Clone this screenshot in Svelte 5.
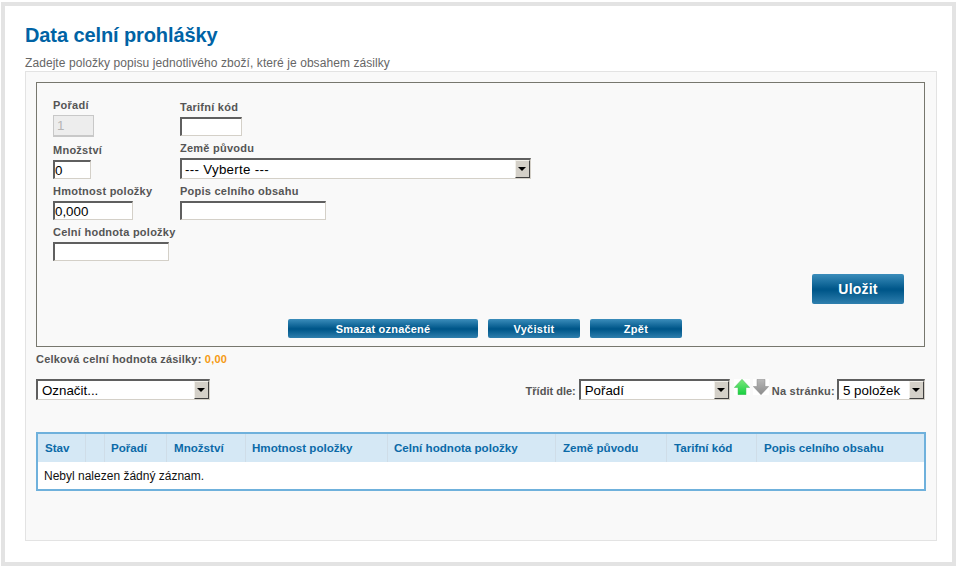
<script>
  const columns = ['Stav', '', 'Pořadí', 'Množství', 'Hmotnost položky', 'Celní hodnota položky', 'Země původu', 'Tarifní kód', 'Popis celního obsahu'];
</script>

<div class="frame">
  <h1>Data celní prohlášky</h1>
  <p class="intro">Zadejte položky popisu jednotlivého zboží, které je obsahem zásilky</p>
  <div class="panel">
    <section class="box">
      <div class="fields">
        <div class="col col-left">
          <label class="f f1"><span>Pořadí</span><input class="w-order" value="1" disabled /></label>
          <label class="f f2"><span>Množství</span><input class="w-qty" value="0" /></label>
          <label class="f f3"><span>Hmotnost položky</span><input class="w-weight" value="0,000" /></label>
          <label class="f f4"><span>Celní hodnota položky</span><input class="w-value" /></label>
        </div>
        <div class="col col-right">
          <label class="f f5"><span>Tarifní kód</span><input class="w-tariff" /></label>
          <div class="f f6">
            <span>Země původu</span>
            <div class="select w-country"><span class="val">--- Vyberte ---</span><i class="arrow"></i></div>
          </div>
          <label class="f f7"><span>Popis celního obsahu</span><input class="w-desc" /></label>
        </div>
      </div>
      <div class="save-row"><button class="btn big">Uložit</button></div>
      <div class="btn-row">
        <button class="btn b-delete">Smazat označené</button>
        <button class="btn b-small">Vyčistit</button>
        <button class="btn b-small">Zpět</button>
      </div>
    </section>

    <p class="total">Celková celní hodnota zásilky: <b>0,00</b></p>

    <div class="toolbar">
      <div class="select w-mark"><span class="val">Označit...</span><i class="arrow"></i></div>
      <div class="sort">
        <span class="tl tl-sort">Třídit dle:</span>
        <div class="select w-sort"><span class="val">Pořadí</span><i class="arrow"></i></div>
        <svg class="ic" width="16" height="16" viewBox="0 0 16 16">
          <defs>
            <linearGradient id="gu" x1="0" y1="0" x2="0" y2="1">
              <stop offset="0" stop-color="#7ee87e" />
              <stop offset="1" stop-color="#16d040" />
            </linearGradient>
          </defs>
          <path d="M8 .3 15.7 8.5H12V15.7H4V8.5H.3Z" fill="url(#gu)" stroke="#4fb85f" stroke-width=".5" />
        </svg>
        <svg class="ic ic2" width="16" height="16" viewBox="0 0 16 16">
          <defs>
            <linearGradient id="gd" x1="0" y1="0" x2="0" y2="1">
              <stop offset="0" stop-color="#b8b8b8" />
              <stop offset="1" stop-color="#8c8c8c" />
            </linearGradient>
          </defs>
          <path d="M4 .3H12V7.5H15.7L8 15.7 .3 7.5H4Z" fill="url(#gd)" stroke="#8a8a8a" stroke-width=".5" />
        </svg>
        <span class="tl">Na stránku:</span>
        <div class="select w-page"><span class="val">5 položek</span><i class="arrow"></i></div>
      </div>
    </div>

    <table>
      <thead>
        <tr>
          {#each columns as c}
            <th>{c}</th>
          {/each}
        </tr>
      </thead>
      <tbody>
        <tr><td colspan="9">Nebyl nalezen žádný záznam.</td></tr>
      </tbody>
    </table>
  </div>
</div>

<style>
  :global(body) {
    margin: 0;
    background: #fff;
    font-family: "Liberation Sans", Arial, sans-serif;
  }
  .frame {
    box-sizing: border-box;
    width: 955px;
    height: 564px;
    margin: 2px 0 0 1px;
    border: 4px solid #e3e3e3;
    background: #fff;
    padding: 16px 15px 0 20px;
  }
  h1 {
    margin: 0;
    font-size: 20px;
    line-height: 26px;
    font-weight: bold;
    color: #0063a5;
    letter-spacing: -0.1px;
  }
  .intro {
    margin: 8px 0 0;
    font-size: 12px;
    line-height: 14px;
    color: #666;
    letter-spacing: 0.07px;
  }
  .panel {
    box-sizing: border-box;
    height: 470px;
    margin-top: 1px;
    border: 1px solid #e3e3e3;
    background: #f9f9f9;
    padding: 10px 11px 0 10px;
  }
  .box {
    box-sizing: border-box;
    height: 265px;
    width: 889px;
    border: 1px solid #77776e;
    padding: 0 0 0 16px;
  }
  .fields {
    display: flex;
    height: 191px;
  }
  .col {
    display: flex;
    flex-direction: column;
    align-items: flex-start;
  }
  .col-left { width: 127px; }
  .f {
    display: block;
  }
  .f > span {
    display: block;
    font-size: 11px;
    line-height: 13px;
    font-weight: bold;
    color: #555;
    white-space: nowrap;
    letter-spacing: 0.25px;
    margin-bottom: 3px;
  }
  .f1 { margin-top: 16px; }
  .f2 { margin-top: 7px; }
  .f3 { margin-top: 6px; }
  .f4 { margin-top: 6px; }
  .f5 { margin-top: 18px; }
  .f6 { margin-top: 6px; }
  .f7 { margin-top: 6px; }

  input {
    display: block;
    box-sizing: border-box;
    height: 19px;
    margin: 0;
    padding: 0;
    font: 13.33px "Liberation Sans", Arial, sans-serif;
    color: #000;
    background: #fff;
    border-style: solid;
    border-width: 2px 1px 1px 2px;
    border-color: #5f5f5f #d4d0c8 #d4d0c8 #5f5f5f;
    border-radius: 0;
    outline: none;
  }
  input:disabled {
    background: #ededed;
    color: #b5b5b5;
    height: 22px;
    padding-left: 3px;
    border-width: 1px 1px 2px;
    border-color: #c8c8c8;
  }
  .w-order { width: 41px; }
  .w-qty { width: 38px; }
  .w-weight { width: 80px; }
  .w-value { width: 116px; }
  .w-tariff { width: 62px; }
  .w-desc { width: 146px; }

  .select {
    box-sizing: border-box;
    display: flex;
    align-items: stretch;
    height: 21px;
    background: #fff;
    border-style: solid;
    border-width: 2px 1px 1px 2px;
    border-color: #5f5f5f #d4d0c8 #d4d0c8 #5f5f5f;
  }
  .val {
    flex: 1;
    min-width: 0;
    font-size: 13.33px;
    line-height: 20px;
    padding-left: 4px;
    color: #000;
    white-space: nowrap;
  }
  .w-country .val {
    padding-left: 3px;
    letter-spacing: 0.3px;
  }
  .arrow {
    position: relative;
    flex: none;
    box-sizing: border-box;
    width: 15px;
    background: #d4d0c8;
    border-style: solid;
    border-width: 1px;
    border-color: #f2f0ea #404040 #404040 #f2f0ea;
  }
  .arrow::after {
    content: "";
    position: absolute;
    left: 2px;
    top: 6px;
    border-style: solid;
    border-width: 4px 4px 0;
    border-color: #000 transparent transparent;
  }
  .w-country { width: 351px; }
  .w-mark { width: 174px; }
  .w-sort { width: 151px; }
  .w-page { width: 88px; }

  .save-row {
    display: flex;
    justify-content: flex-end;
    padding-right: 20px;
  }
  .btn {
    display: block;
    box-sizing: border-box;
    margin: 0;
    padding: 0;
    height: 19px;
    border: 0;
    border-radius: 2px;
    background: linear-gradient(#3b8dbb 0%, #00578a 50%, #00578a 55%, #2f7fae 100%);
    color: #fff;
    font: bold 11px "Liberation Sans", Arial, sans-serif;
    letter-spacing: 0.3px;
    text-align: center;
  }
  .big {
    width: 92px;
    height: 30px;
    font-size: 14px;
    letter-spacing: 0.2px;
  }
  .btn-row {
    display: flex;
    gap: 10px;
    margin-top: 15px;
    padding-left: 235px;
  }
  .b-delete { width: 190px; letter-spacing: 0.2px; }
  .b-small { width: 92px; }

  .total {
    margin: 6px 0 0;
    font-size: 11px;
    line-height: 13px;
    font-weight: bold;
    color: #555;
    letter-spacing: 0.2px;
  }
  .total b { color: #f59a12; }

  .toolbar {
    display: flex;
    justify-content: space-between;
    align-items: flex-start;
    width: 889px;
    margin-top: 13px;
  }
  .sort {
    display: flex;
    align-items: flex-start;
  }
  .tl {
    font-size: 11px;
    line-height: 13px;
    font-weight: bold;
    color: #555;
    margin: 6px 2px 0 0;
    white-space: nowrap;
    letter-spacing: 0.25px;
  }
  .tl-sort { margin-right: 3px; letter-spacing: 0; }
  .ic { display: block; margin-left: 4px; background: #fff; }
  .ic2 { margin-left: 3px; margin-right: 3px; }

  table {
    box-sizing: border-box;
    width: 890px;
    margin-top: 32px;
    border: 2px solid #6fb1dc;
    border-collapse: separate;
    border-spacing: 0;
    table-layout: fixed;
    background: #fff;
  }
  th {
    height: 28px;
    padding: 0 0 2px 7px;
    box-sizing: border-box;
    background: #d5e8f5;
    border-right: 1px solid #cfdde8;
    color: #0b6aa8;
    font-size: 11.6px;
    font-weight: bold;
    text-align: left;
    white-space: nowrap;
  }
  th:last-child { border-right: 0; }
  th:nth-child(1) { width: 48px; }
  th:nth-child(2) { width: 19px; }
  th:nth-child(3) { width: 62px; padding-left: 6px; }
  th:nth-child(4) { width: 79px; }
  th:nth-child(5) { width: 142px; padding-left: 6px; }
  th:nth-child(6) { width: 168px; padding-left: 6px; }
  th:nth-child(7) { width: 111px; }
  th:nth-child(8) { width: 90px; }
  td {
    height: 27px;
    padding: 0 0 0 6px;
    font-size: 12px;
    color: #111;
  }
</style>
